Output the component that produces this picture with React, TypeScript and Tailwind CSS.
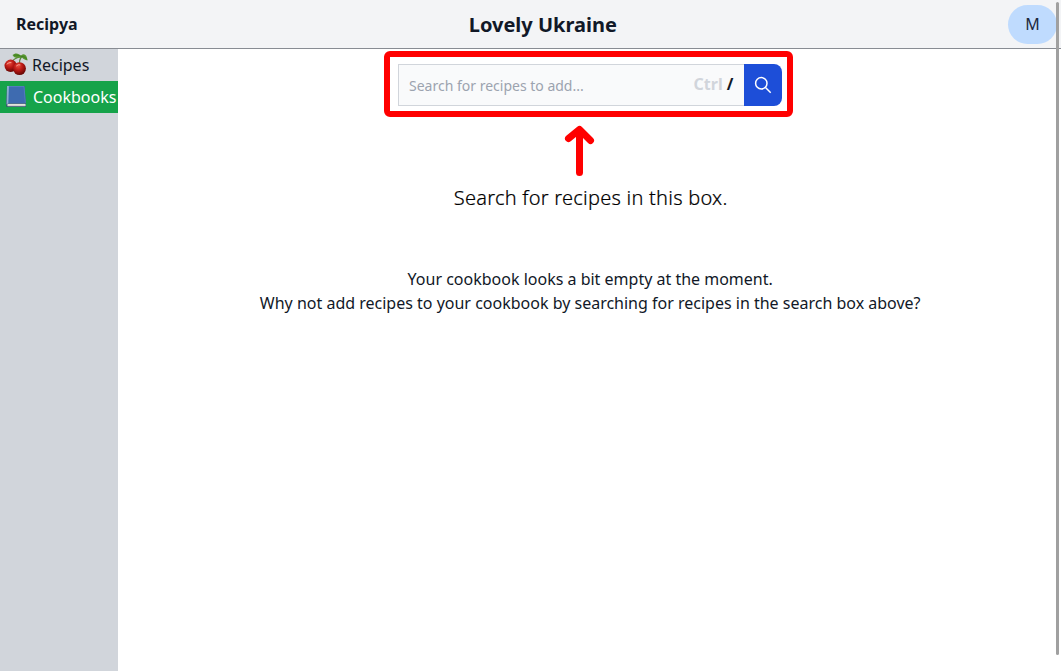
import React from "react";

function Cherries() {
  return (
    <svg className="h-6 w-6 shrink-0" viewBox="0 0 24 24" fill="none">
      <defs>
        <radialGradient id="cherry" cx="0.4" cy="0.3" r="0.7">
          <stop offset="0" stopColor="#e8493a" />
          <stop offset="0.5" stopColor="#b81814" />
          <stop offset="1" stopColor="#650604" />
        </radialGradient>
      </defs>
      <path d="M18 3.500C12 4.500 8 7 6.500 11M18 3.500C15 6.500 15 9 16 12" stroke="#578536" strokeWidth="1.200" />
      <path d="M18 3.500C14 -.5 11 0 8.500 2C10 5 14 6 18 3.500ZM17 2.500C20 0 23 1.500 23.500 7.500C20 6.500 18 5.500 17 2.500Z" fill="#57962f" />
      <path d="M10 2.200C13 1.800 15 2.500 18 3.500C20 3.700 22 4.500 23 6.500" stroke="#327019" strokeWidth=".6" />
      <circle cx="6.700" cy="12.800" r="6.200" fill="url(#cherry)" />
      <circle cx="15.500" cy="15.600" r="6.400" fill="url(#cherry)" />
      <path d="M3 11Q5 9 7 9.500M12.500 12.800Q14 11.100 16 11.800" stroke="#f8a092" strokeWidth="1" strokeLinecap="round" />
    </svg>
  );
}

function Book() {
  return (
    <svg className="h-6 w-6 shrink-0" viewBox="0 0 24 24" fill="none">
      <path d="M3 1H20.500L22 19.500V22H2.500L2 18.500Z" fill="#34516e" />
      <path d="M3.500 18.800H21.500V21.200H3.500Z" fill="#f0f0e5" />
      <path d="M4 20.200H21.500" stroke="#a8afb2" strokeWidth=".6" />
      <path d="M3 1H20.500L21.800 18.200H3Z" fill="#3e6bb0" />
      <path d="M3 1H5L4.300 18.200L2.500 19.500Z" fill="#8aadd0" />
      <path d="M5 1.500H20L21.400 17.800" stroke="#6088c4" strokeWidth=".6" />
    </svg>
  );
}

function Header() {
  return (
    <header className="flex h-[49px] shrink-0 items-center justify-between border-b border-[#888c93] bg-[#f3f4f6] pr-[4px] pl-4">
      <span className="font-bold">Recipya</span>
      <h1 className="pt-px text-xl font-bold">Lovely Ukraine</h1>
      <button className="flex h-[39px] w-[49px] items-center justify-center rounded-[20px] bg-[#bfdbfe] text-base text-slate-800">M</button>
    </header>
  );
}

function Sidebar() {
  return (
    <aside className="w-[118.4px] shrink-0 bg-[#d1d5db]">
      <nav>
        <a className="flex h-8 items-center gap-1 pl-1">
          <Cherries />
          <span>Recipes</span>
        </a>
        <a className="flex h-8 items-center gap-[5px] bg-[#16a34a] pl-1 text-white">
          <Book />
          <span>Cookbooks</span>
        </a>
      </nav>
    </aside>
  );
}

function SearchBox() {
  return (
    <div className="mt-[2px] mr-[3.4px] h-[66px] w-[409px] rounded-[6px] border-6 border-[#ff0000] pt-[7px] pl-2">
      <form className="flex h-[42px] w-96">
        <div className="flex w-[346px] items-center border border-r-0 border-[#d1d5db] bg-[#f9fafb] pr-[10px] pl-[10.5px]">
          <span className="flex-1 pt-[2px] text-sm text-[#9ca3af]">Search for recipes to add...</span>
          <span className="pb-[3px] font-bold">
            <span className="text-[#d1d5db]">Ctrl</span> /
          </span>
        </div>
        <button type="button" className="flex w-[38px] items-center justify-center rounded-r-lg bg-[#1d4ed8]">
          <svg className="h-5 w-5" viewBox="0 0 20 20" fill="none" stroke="white" strokeWidth="1.500">
            <circle cx="8.300" cy="8.300" r="5.700" />
            <path d="M12.500 12.500L17.700 17.700" />
          </svg>
        </button>
      </form>
    </div>
  );
}

export default function App() {
  return (
    <div className="relative flex h-[671px] w-full flex-col overflow-hidden bg-white font-['Noto_Sans',sans-serif] text-base text-[#111827]">
      <Header />
      <div className="flex min-h-0 flex-1">
        <Sidebar />
        <main className="flex flex-1 flex-col items-center">
          <SearchBox />
          <svg className="mt-[8px] mr-[21px] h-[52px] w-[32px]" viewBox="0 0 32 52" fill="none" stroke="#ff0000" strokeWidth="7" strokeLinecap="round" strokeLinejoin="round">
            <path d="M16.500 47.500V5M5.500 13.500L16.500 4.500L27.500 15.500" />
          </svg>
          <p className="mt-[7px] ml-[2px] text-xl font-light tracking-[0.24px] text-black [-webkit-text-stroke:0.2px_black]">Search for recipes in this box.</p>
          <div className="mt-[55px] ml-px text-center leading-6">
            <p>Your cookbook looks a bit empty at the moment.</p>
            <p>Why not add recipes to your cookbook by searching for recipes in the search box above?</p>
          </div>
        </main>
      </div>
      <div className="absolute top-[2px] right-[2px] h-[653px] w-[3px] rounded-full bg-[#a0a0a0]" />
    </div>
  );
}
